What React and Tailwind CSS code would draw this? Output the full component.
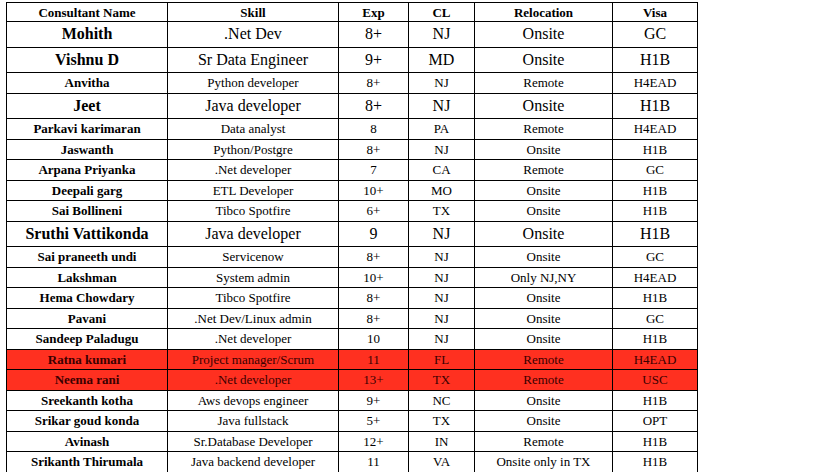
import React from 'react';

const rows = [
  ['Mohith', '.Net Dev', '8+', 'NJ', 'Onsite', 'GC', 'big'],
  ['Vishnu D', 'Sr Data Engineer', '9+', 'MD', 'Onsite', 'H1B', 'big'],
  ['Anvitha', 'Python developer', '8+', 'NJ', 'Remote', 'H4EAD'],
  ['Jeet', 'Java developer', '8+', 'NJ', 'Onsite', 'H1B', 'big'],
  ['Parkavi karimaran', 'Data analyst', '8', 'PA', 'Remote', 'H4EAD'],
  ['Jaswanth', 'Python/Postgre', '8+', 'NJ', 'Onsite', 'H1B'],
  ['Arpana Priyanka', '.Net developer', '7', 'CA', 'Remote', 'GC'],
  ['Deepali garg', 'ETL Developer', '10+', 'MO', 'Onsite', 'H1B'],
  ['Sai Bollineni', 'Tibco Spotfire', '6+', 'TX', 'Onsite', 'H1B'],
  ['Sruthi Vattikonda', 'Java developer', '9', 'NJ', 'Onsite', 'H1B', 'big'],
  ['Sai praneeth undi', 'Servicenow', '8+', 'NJ', 'Onsite', 'GC'],
  ['Lakshman', 'System admin', '10+', 'NJ', 'Only NJ,NY', 'H4EAD'],
  ['Hema Chowdary', 'Tibco Spotfire', '8+', 'NJ', 'Onsite', 'H1B'],
  ['Pavani', '.Net Dev/Linux admin', '8+', 'NJ', 'Onsite', 'GC'],
  ['Sandeep Paladugu', '.Net developer', '10', 'NJ', 'Onsite', 'H1B'],
  ['Ratna kumari', 'Project manager/Scrum', '11', 'FL', 'Remote', 'H4EAD', 'red'],
  ['Neema rani', '.Net developer', '13+', 'TX', 'Remote', 'USC', 'red'],
  ['Sreekanth kotha', 'Aws devops engineer', '9+', 'NC', 'Onsite', 'H1B'],
  ['Srikar goud konda', 'Java fullstack', '5+', 'TX', 'Onsite', 'OPT'],
  ['Avinash', 'Sr.Database Developer', '12+', 'IN', 'Remote', 'H1B'],
  ['Srikanth Thirumala', 'Java backend developer', '11', 'VA', 'Onsite only in TX', 'H1B'],
  ['', '', '', '', '', ''],
];

const headers = ['Consultant Name', 'Skill', 'Exp', 'CL', 'Relocation', 'Visa'];
const widths = ['w-[161px]', 'w-[171px]', 'w-[70px]', 'w-[66px]', 'w-[138px]', 'w-[85px]'];

export default function App() {
  return (
    <div className="w-[816px] h-[472px] overflow-hidden bg-white pl-[6px] pt-[2px] font-['Liberation_Serif','Times_New_Roman',serif]">
      <table className="border-collapse table-fixed w-[691px] text-black">
        <thead>
          <tr className="h-[19px]">
            {headers.map((h, i) => (
              <th key={h} className={`${widths[i]} border border-black p-0 text-[13px] font-bold text-center leading-none`}>
                {h}
              </th>
            ))}
          </tr>
        </thead>
        <tbody>
          {rows.map((r, idx) => {
            const big = r[6] === 'big';
            const red = r[6] === 'red';
            return (
              <tr
                key={idx}
                className={`${big ? 'h-[25.5px] text-[16px]' : 'h-[20.5px] text-[13px]'} ${red ? 'bg-[#ff3020] text-[#3a0000]' : ''}`}
              >
                {r.slice(0, 6).map((c, i) => (
                  <td
                    key={i}
                    className={`border border-black p-0 text-center leading-none whitespace-nowrap ${i === 0 ? 'font-bold' : ''}`}
                  >
                    {c}
                  </td>
                ))}
              </tr>
            );
          })}
        </tbody>
      </table>
    </div>
  );
}
